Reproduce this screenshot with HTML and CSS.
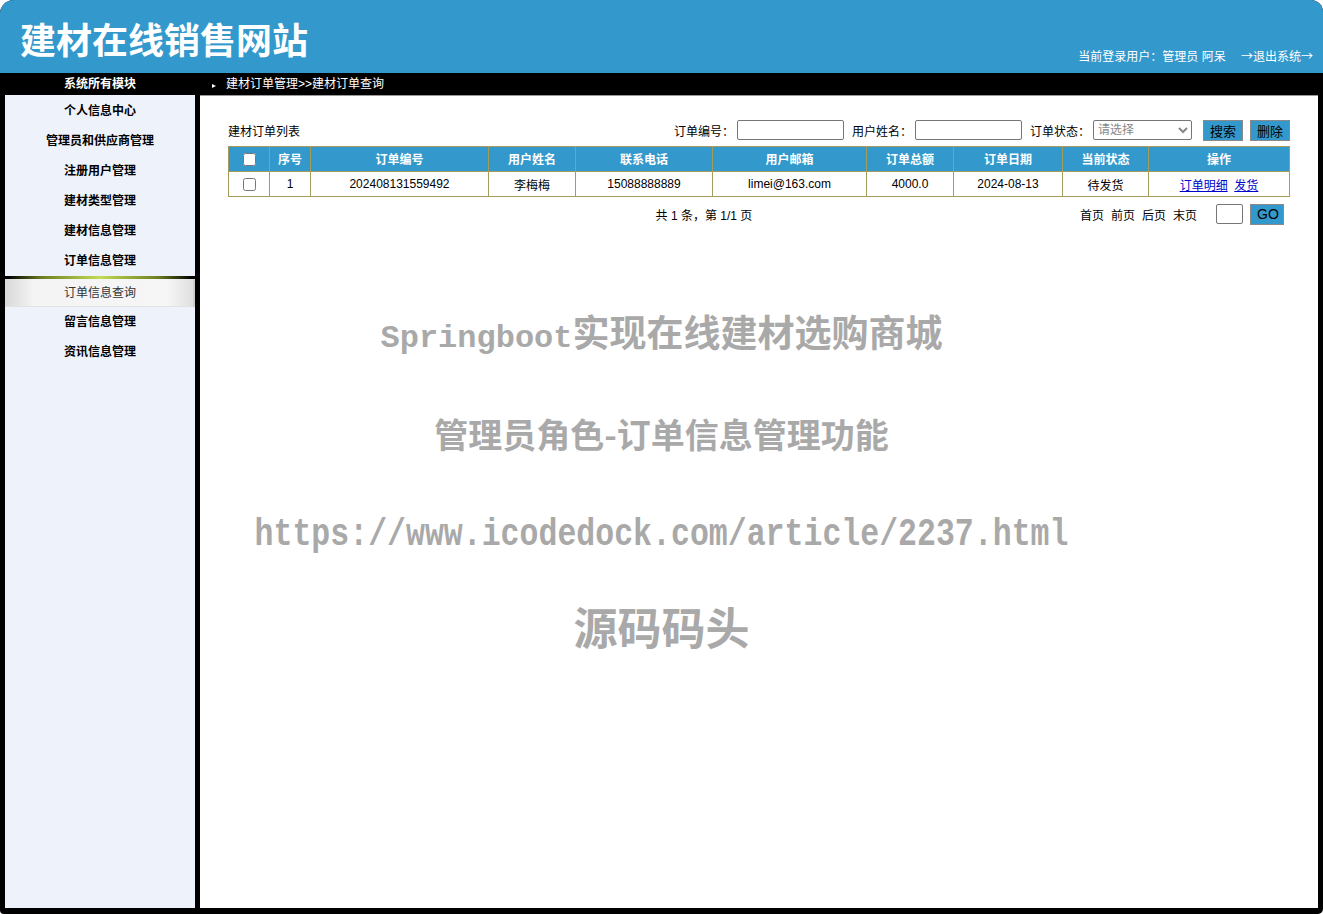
FILE: index.html
```html
<!DOCTYPE html>
<html lang="zh">
<head>
  <meta charset="UTF-8">
  <title>建材在线销售网站</title>
  <link rel="stylesheet" href="styles.css">
</head>
<body>
  <div class="frame">
    <header class="top">
      <h1 class="logo">建材在线销售网站</h1>
      <div class="user">
        当前登录用户：管理员 阿呆
        <a class="logout" href="#">→退出系统→</a>
      </div>
    </header>

    <div class="navbar">
      <div class="nav-title">系统所有模块</div>
      <div class="crumb"><span class="tri"></span>建材订单管理&gt;&gt;建材订单查询</div>
    </div>

    <div class="body">
      <aside class="side">
        <div class="menu">个人信息中心</div>
        <div class="menu">管理员和供应商管理</div>
        <div class="menu">注册用户管理</div>
        <div class="menu">建材类型管理</div>
        <div class="menu">建材信息管理</div>
        <div class="menu">订单信息管理</div>
        <div class="sub">订单信息查询</div>
        <div class="menu">留言信息管理</div>
        <div class="menu">资讯信息管理</div>
      </aside>

      <main class="main">
        <div class="toolbar">
          <div class="list-title">建材订单列表</div>
          <div class="search">
            <label class="field">订单编号：<input type="text" class="txt"></label>
            <label class="field">用户姓名：<input type="text" class="txt"></label>
            <label class="field">订单状态：
              <select class="sel">
                <option>请选择</option>
                <option>待发货</option>
                <option>已发货</option>
              </select>
            </label>
            <button class="btn btn-search">搜索</button>
            <button class="btn">删除</button>
          </div>
        </div>

        <table class="grid">
          <thead>
            <tr>
              <th class="c-chk"><input type="checkbox"></th>
              <th class="c-no">序号</th>
              <th class="c-id">订单编号</th>
              <th class="c-name">用户姓名</th>
              <th class="c-tel">联系电话</th>
              <th class="c-mail">用户邮箱</th>
              <th class="c-sum">订单总额</th>
              <th class="c-date">订单日期</th>
              <th class="c-state">当前状态</th>
              <th>操作</th>
            </tr>
          </thead>
          <tbody>
            <tr>
              <td><input type="checkbox"></td>
              <td>1</td>
              <td>202408131559492</td>
              <td>李梅梅</td>
              <td>15088888889</td>
              <td>limei@163.com</td>
              <td>4000.0</td>
              <td>2024-08-13</td>
              <td>待发货</td>
              <td><a href="#">订单明细</a>&nbsp;&nbsp;<a href="#">发货</a></td>
            </tr>
          </tbody>
        </table>

        <div class="pager">
          <div class="pager-info">共 1 条，第 1/1 页</div>
          <div class="pager-nav">
            <span>首页</span><span>前页</span><span>后页</span><span>末页</span>
            <input type="text" class="page-no">
            <button class="btn btn-go">GO</button>
          </div>
        </div>
      </main>
    </div>
  </div>

  <div class="watermark">
    <div class="wm wm-1"><span class="mono">Springboot</span>实现在线建材选购商城</div>
    <div class="wm wm-2">管理员角色-订单信息管理功能</div>
    <div class="wm wm-3">https://www.icodedock.com/article/2237.html</div>
    <div class="wm wm-4">源码码头</div>
  </div>
</body>
</html>
```

FILE: styles.css
```css
* {
  margin: 0;
  padding: 0;
  box-sizing: border-box;
}

html, body {
  width: 100%;
  height: 100%;
  overflow: hidden;
  background: #fff;
  font-family: "Liberation Sans", "Noto Sans CJK SC", sans-serif;
  font-size: 12px;
  color: #000;
}

.frame {
  display: flex;
  flex-direction: column;
  width: 1323px;
  height: 914px;
  background: #000;
  border-radius: 14px 12px 5px 4px;
  overflow: hidden;
}

/* header */
.top {
  display: flex;
  justify-content: space-between;
  height: 73px;
  padding: 0 10px 0 20px;
  background: #3399cc;
  color: #fff;
}

.logo {
  align-self: center;
  font-size: 36px;
  font-weight: bold;
  margin-top: 2px;
}

.user {
  align-self: flex-end;
  padding-bottom: 9px;
  font-size: 12px;
}

.logout {
  color: #fff;
  text-decoration: none;
  margin-left: 12px;
  font-family: "Noto Sans CJK SC", sans-serif;
}

/* black bar */
.navbar {
  display: flex;
  align-items: center;
  height: 22px;
  padding-bottom: 3px;
  color: #fff;
}

.nav-title {
  width: 200px;
  text-align: center;
  font-weight: bold;
}

.crumb {
  display: flex;
  align-items: center;
  padding-left: 12px;
}

.tri {
  width: 0;
  height: 0;
  margin: 7px 10px 0 0;
  border-top: 2px solid transparent;
  border-bottom: 2px solid transparent;
  border-left: 4px solid #fff;
}

/* body */
.body {
  display: flex;
  flex: 1;
  padding: 0 5px 6px 5px;
  gap: 5px;
}

.side {
  width: 190px;
  padding-top: 1px;
  background: #eef2fb;
}

.menu {
  height: 30px;
  line-height: 30px;
  text-align: center;
  font-weight: bold;
}

.sub {
  height: 31px;
  line-height: 29px;
  text-align: center;
  color: #333;
  border-top: 3px solid transparent;
  border-image: linear-gradient(to right, #000 2%, #6f7f22 20%, #c3dc55 50%, #6f7f22 80%, #000 98%) 1;
  background: linear-gradient(to right, #d8d8d8, #f4f4f4 15%, #f6f6f6 85%, #dedede);
  box-shadow: inset -2px 0 0 #cfcfcf, inset 0 -1px 0 #e2e2e2;
}

.main {
  flex: 1;
  background: #fff;
  border-top: 1px solid #999;
  padding: 0 28px;
}

.toolbar {
  display: flex;
  align-items: center;
  margin-top: 23px;
  height: 22px;
}

.search {
  display: flex;
  align-items: center;
  margin-left: auto;
}

.field {
  display: flex;
  align-items: center;
  margin-right: 8px;
}

.txt {
  width: 107px;
  height: 20px;
  margin-left: 3px;
  border: 1px solid #767676;
  border-radius: 2px;
}

.sel {
  width: 99px;
  height: 20px;
  margin-left: 3px;
  font-family: "Liberation Sans", "Noto Sans CJK SC", sans-serif;
  font-size: 12px;
  color: #888;
  border: 1px solid #767676;
  border-radius: 2px;
  background: #fff;
}

.btn {
  height: 21px;
  padding: 0 6px;
  background: #3399cc;
  border: 1px solid #8a8a8a;
  font-family: "Liberation Sans", "Noto Sans CJK SC", sans-serif;
  font-size: 13px;
  color: #000;
}

.btn-search {
  margin: 0 7px 0 3px;
}

/* table */
.grid {
  width: 100%;
  margin-top: 5px;
  border-collapse: collapse;
  text-align: center;
}

.grid th,
.grid td {
  height: 25px;
  border: 1px solid #a39d5c;
}

.grid th {
  background: #3399cc;
  color: #fff;
  padding-bottom: 1px;
}

.grid input[type="checkbox"] {
  width: 13px;
  height: 13px;
  vertical-align: middle;
}

.grid a {
  color: #00c;
}

.c-chk { width: 41px; }
.c-no { width: 41px; }
.c-id { width: 178px; }
.c-name { width: 87px; }
.c-tel { width: 137px; }
.c-mail { width: 154px; }
.c-sum { width: 87px; }
.c-date { width: 109px; }
.c-state { width: 86px; }

/* pager */
.pager {
  display: flex;
  align-items: center;
  margin-top: 6px;
  height: 22px;
}

.pager-info {
  flex: 1;
  text-align: center;
  padding-left: 100px;
}

.pager-nav {
  display: flex;
  align-items: center;
  margin-right: 6px;
}

.pager-nav span {
  margin-right: 7px;
}

.page-no {
  width: 27px;
  height: 20px;
  margin-left: 12px;
  border: 1px solid #767676;
  border-radius: 2px;
}

.btn-go {
  width: 34px;
  margin-left: 7px;
  font-size: 14px;
}

/* watermark over the page */
.watermark {
  position: absolute;
  top: 284px;
  left: 0;
  width: 1323px;
  pointer-events: none;
  color: #a9a9a9;
  font-family: "Noto Sans CJK SC", sans-serif;
  font-weight: bold;
  text-align: center;
}

.wm {
  height: 100px;
  line-height: 100px;
  white-space: nowrap;
}

.wm-1 {
  font-size: 37px;
  margin-top: -3px;
}

.mono {
  font-family: "Liberation Mono", monospace;
  font-size: 32px;
}

.wm-2 {
  font-size: 34px;
  margin-top: 3px;
}

.wm-3 {
  font-family: "Liberation Mono", monospace;
  font-size: 38px;
  transform: scaleX(0.83);
  margin-top: 1px;
}

.wm-4 {
  font-size: 44px;
  margin-top: -9px;
}
```
